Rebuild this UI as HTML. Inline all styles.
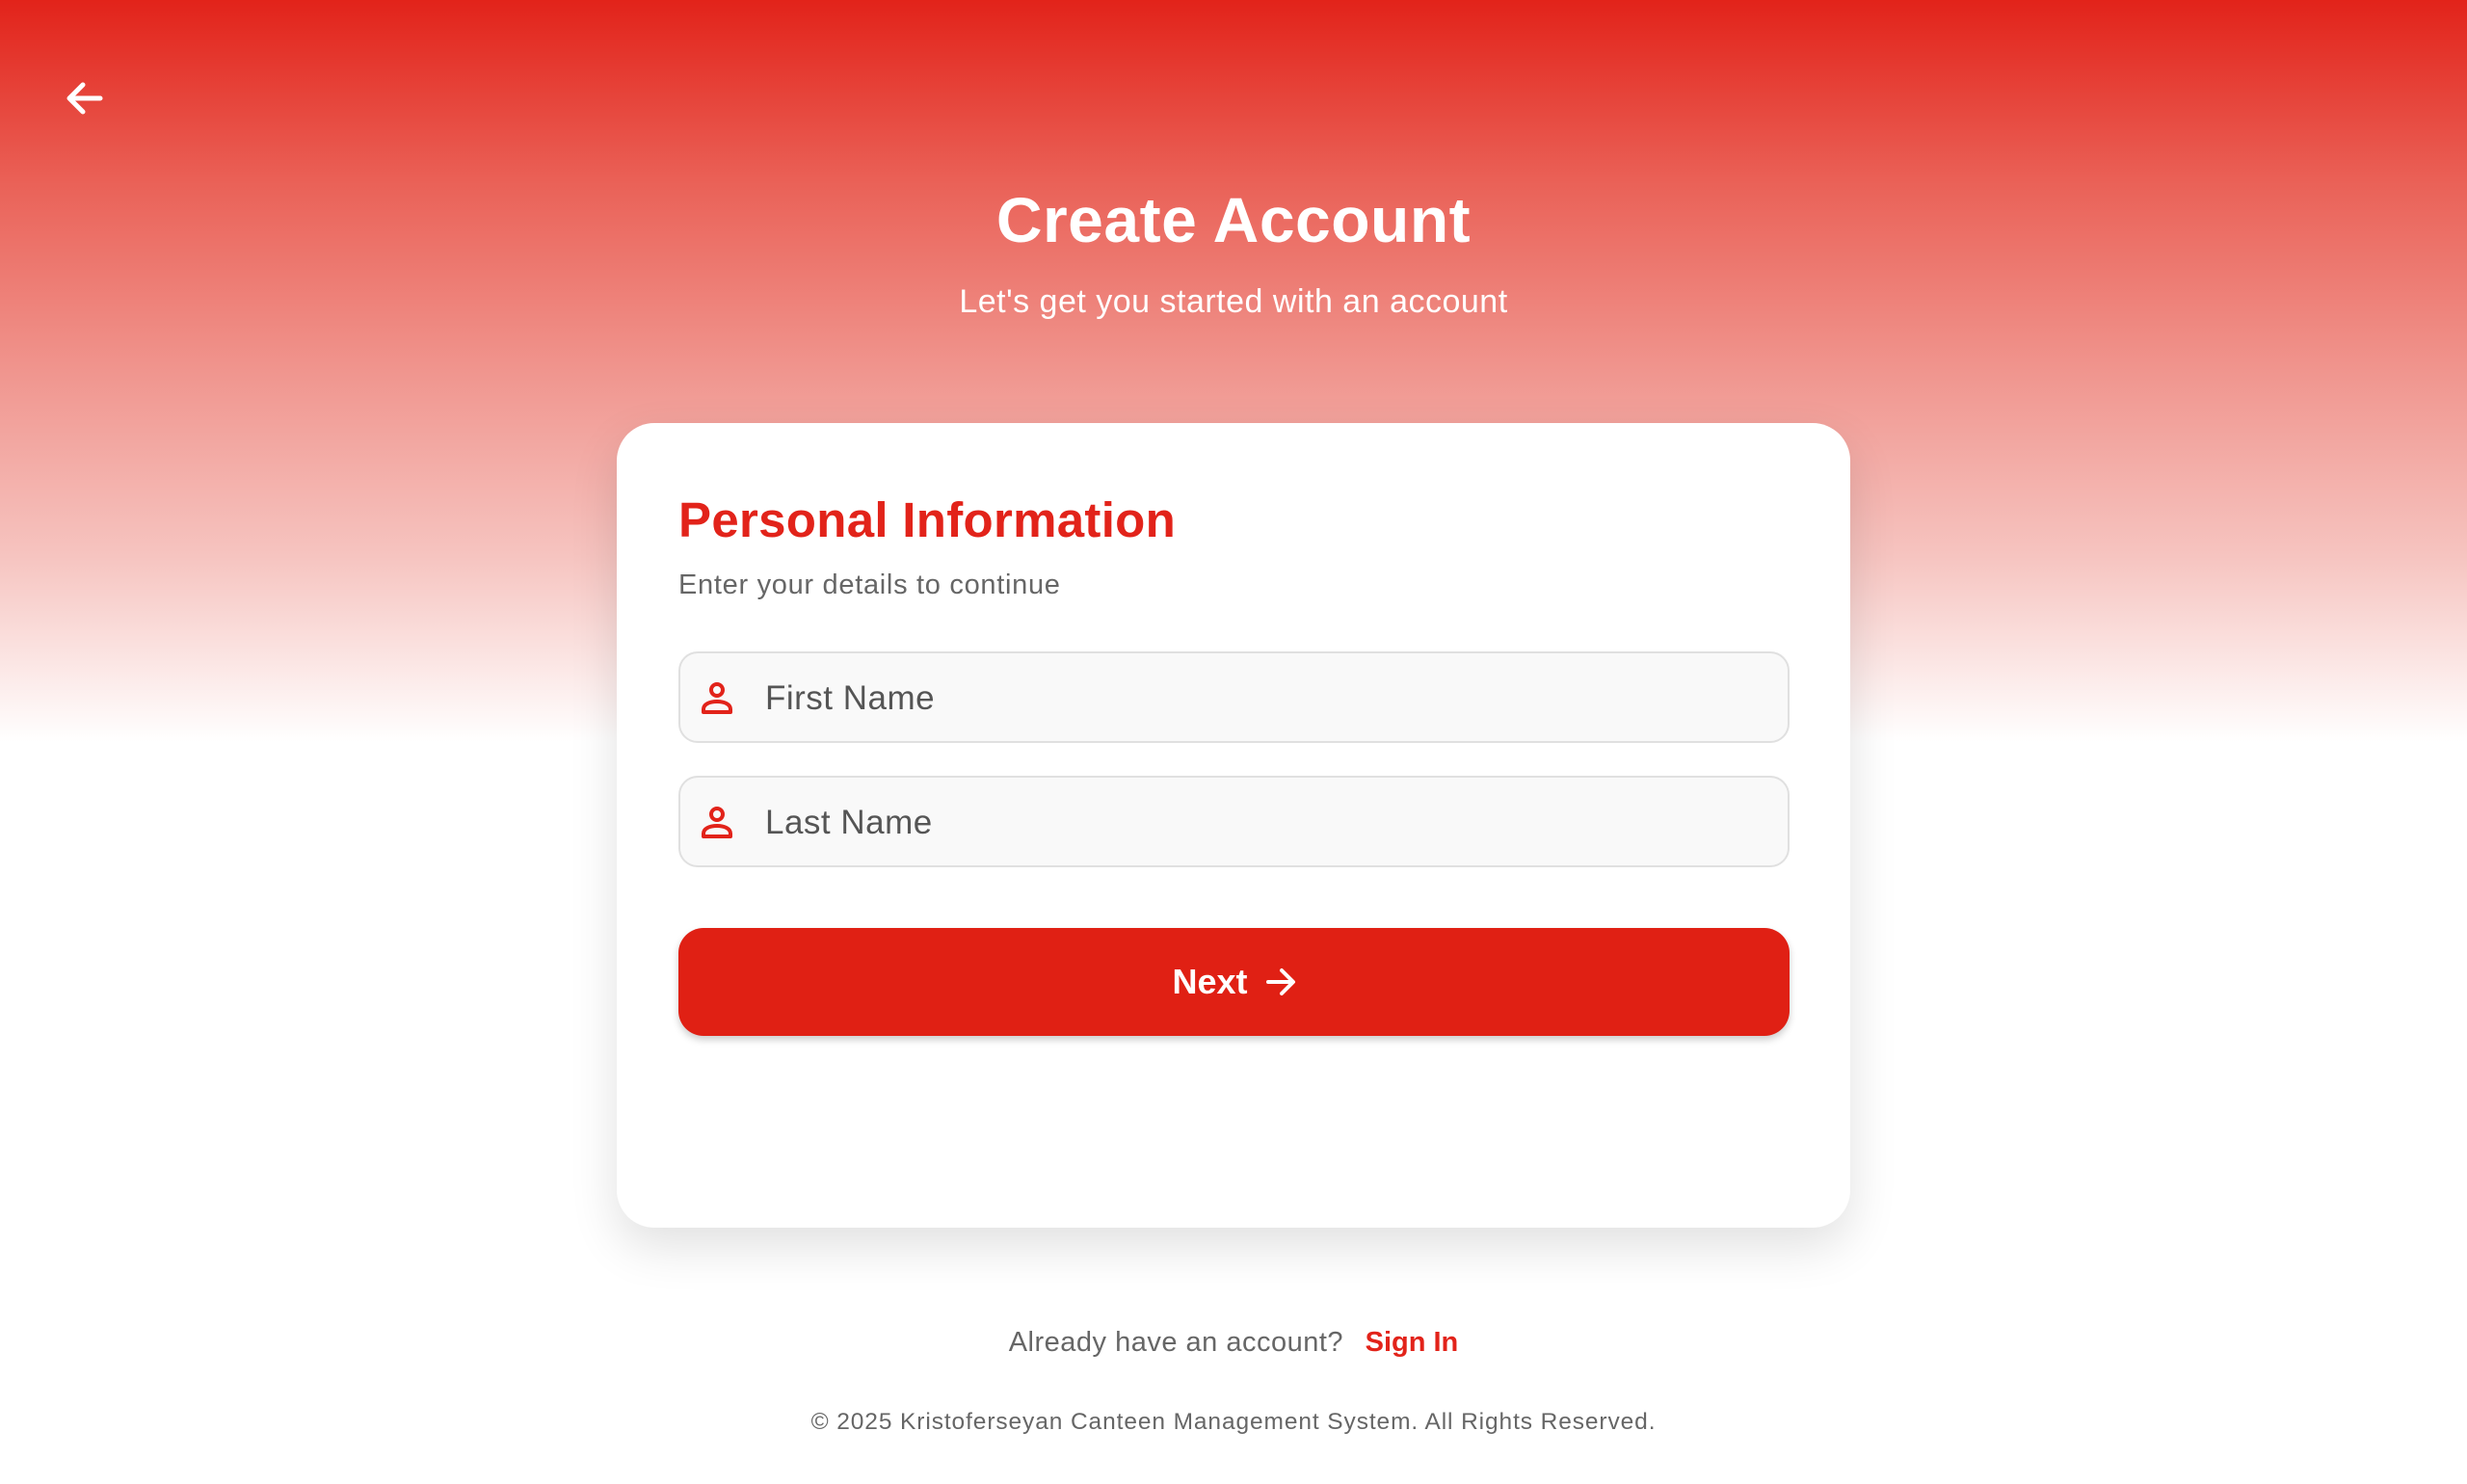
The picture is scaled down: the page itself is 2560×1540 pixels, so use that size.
<!DOCTYPE html>
<html><head><meta charset="utf-8"><style>
*{margin:0;padding:0;box-sizing:border-box}
html,body{width:2560px;height:1540px;overflow:hidden}
body{font-family:"Liberation Sans",sans-serif;background:#fff;position:relative}
.bg{position:absolute;left:0;top:0;width:2560px;height:770px;background:linear-gradient(180deg,#e2231a 0%,#ea6258 25%,#f0958e 50%,#f6c4c0 75%,#fff 100%)}
.abs{position:absolute}
.title{left:0;width:2560px;text-align:center;top:188px;font-size:66px;font-weight:bold;color:#fff;line-height:80px;letter-spacing:0.5px}
.sub{left:0;width:2560px;text-align:center;top:292px;font-size:34px;color:#fff;line-height:42px;letter-spacing:0.5px}
.card{left:640px;top:439px;width:1280px;height:835px;background:#fff;border-radius:39px;box-shadow:0 20px 50px rgba(0,0,0,0.12)}
.h2{left:64px;top:70px;font-size:51px;font-weight:bold;color:#e2231a;line-height:62px;letter-spacing:0.3px}
.p{left:64px;top:150px;font-size:29px;color:#666;line-height:36px;letter-spacing:0.7px}
.inp{left:64px;width:1153px;height:95px;background:#f9f9f9;border:2px solid #e0e0e0;border-radius:20px}
.inp svg{position:absolute;left:20px;top:28px}
.inp span{position:absolute;left:88px;top:27px;font-size:35px;color:#555;line-height:40px;letter-spacing:0.5px}
.btn{left:64px;top:524px;width:1153px;height:112px;background:#e02014;border-radius:26px;box-shadow:0 4px 8px rgba(0,0,0,0.2);color:#fff;font-weight:bold;font-size:36px;display:flex;align-items:center;justify-content:center;gap:18px}
.already{left:0;width:2560px;text-align:center;top:1375px;font-size:29px;color:#666;line-height:36px;letter-spacing:0.5px}
.already b{color:#e2231a;margin-left:14px;letter-spacing:0}
.copy{left:0;width:2560px;text-align:center;top:1461px;font-size:24.5px;color:#666;line-height:30px;letter-spacing:0.9px}
</style></head><body>
<div class="bg"></div>
<svg class="abs" style="left:66px;top:82px" width="42" height="40" viewBox="0 0 42 40"><path d="M38 20H7M20 6L6 20l14 14" fill="none" stroke="#fff" stroke-width="5" stroke-linecap="round" stroke-linejoin="round"/></svg>
<div class="abs title">Create Account</div>
<div class="abs sub">Let's get you started with an account</div>
<div class="abs card">
  <div class="abs h2">Personal Information</div>
  <div class="abs p">Enter your details to continue</div>
  <div class="abs inp" style="top:237px"><svg width="36" height="36" viewBox="0 0 36 36"><circle cx="18" cy="10" r="6" fill="none" stroke="#e2231a" stroke-width="4"/><path d="M4 33v-3c0-5 6-8 14-8s14 3 14 8v3z" fill="none" stroke="#e2231a" stroke-width="4" stroke-linejoin="round"/></svg><span>First Name</span></div>
  <div class="abs inp" style="top:366px"><svg width="36" height="36" viewBox="0 0 36 36"><circle cx="18" cy="10" r="6" fill="none" stroke="#e2231a" stroke-width="4"/><path d="M4 33v-3c0-5 6-8 14-8s14 3 14 8v3z" fill="none" stroke="#e2231a" stroke-width="4" stroke-linejoin="round"/></svg><span>Last Name</span></div>
  <div class="abs btn"><span>Next</span><svg width="32" height="32" viewBox="0 0 32 32"><path d="M3 16h25M17 4l12 12-12 12" fill="none" stroke="#fff" stroke-width="4" stroke-linecap="round" stroke-linejoin="round"/></svg></div>
</div>
<div class="abs already">Already have an account? <b>Sign In</b></div>
<div class="abs copy">© 2025 Kristoferseyan Canteen Management System. All Rights Reserved.</div>
</body></html>
